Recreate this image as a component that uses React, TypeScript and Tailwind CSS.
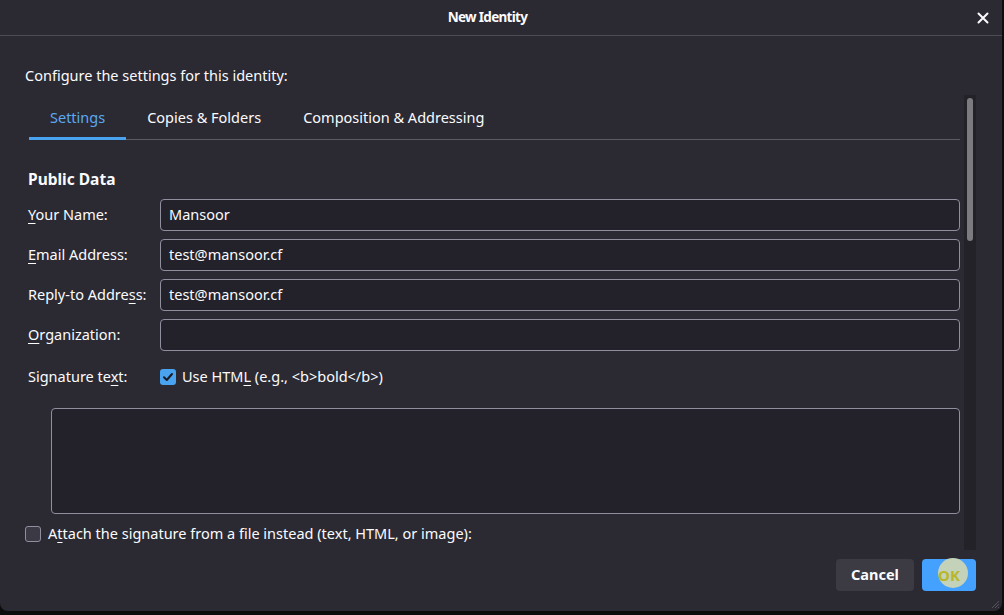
import React from "react";

const U = ({ children }: { children: React.ReactNode }) => (
  <span className="underline underline-offset-[3px] decoration-1">{children}</span>
);

function Field({ label, value }: { label: React.ReactNode; value?: string }) {
  return (
    <div className="flex items-center h-[32px]">
      <div className="w-[132px] shrink-0">{label}</div>
      <div className="flex-1 h-[32px] rounded-[4px] border border-[#8f8f9d] bg-[#23222b] flex items-center px-[8px]">
        {value}
      </div>
    </div>
  );
}

export default function App() {
  return (
    <div
      className="w-[1004px] h-[615px] bg-[#0d0d0d] text-[#fbfbfe] overflow-hidden text-[14.5px]"
      style={{ fontFamily: '"Noto Sans", "DejaVu Sans", sans-serif' }}
    >
      <div className="relative w-[1002px] h-[611px] bg-[#2b2a33] rounded-b-[8px] flex flex-col overflow-hidden">
        {/* Title bar */}
        <div className="relative h-[36px] shrink-0 border-b border-[#4d4c55] flex items-center justify-center pr-[27px]">
          <span className="text-[13.5px] font-bold tracking-[-0.7px]">New Identity</span>
          <svg
            className="absolute right-[13px] top-[12px]"
            width="12"
            height="12"
            viewBox="0 0 12 12"
          >
            <path d="M1.5 1.5 L10.5 10.5 M10.5 1.5 L1.5 10.5" stroke="#fbfbfe" strokeWidth="2" strokeLinecap="round" />
          </svg>
        </div>

        <div className="pl-[25px] pt-[29px] h-[20px] box-content leading-[20px]">
          Configure the settings for this identity:
        </div>

        {/* Scroll area */}
        <div className="mt-[10px] ml-[25px] w-[951px] h-[455px] flex">
          <div className="flex-1 flex flex-col overflow-hidden">
            {/* Tabs */}
            <div className="ml-[4px] mr-[4px] mt-[2px] flex border-b border-[#5b5b66] h-[43px] shrink-0">
              <div className="px-[21px] pt-[2px] flex items-center border-b-[3px] border-[#4aa3ef] -mb-px text-[#5aa9f2]">
                Settings
              </div>
              <div className="px-[21px] flex items-center">Copies &amp; Folders</div>
              <div className="px-[21px] flex items-center">Composition &amp; Addressing</div>
            </div>

            <div className="pl-[3px] pr-[4px] flex flex-col">
              <div className="mt-[29px] h-[22px] flex items-center text-[15.5px] font-bold">Public Data</div>
              <div className="mt-[8px] flex flex-col gap-[8px]">
                <Field label={<><U>Y</U>our Name:</>} value="Mansoor" />
                <Field label={<><U>E</U>mail Address:</>} value="test@mansoor.cf" />
                <Field label={<>Reply-to Addre<U>s</U>s:</>} value="test@mansoor.cf" />
                <Field label={<><U>O</U>rganization:</>} />
              </div>
              <div className="mt-[18px] flex items-center h-[16px]">
                <div className="w-[132px] shrink-0">
                  Signature te<U>x</U>t:
                </div>
                <div className="w-[16px] h-[16px] rounded-[3px] bg-[#4aa3ef] flex items-center justify-center">
                  <svg width="12" height="12" viewBox="0 0 12 12">
                    <path d="M2 6.3 L4.8 9 L10 3" fill="none" stroke="#1c1b22" strokeWidth="2" strokeLinecap="round" strokeLinejoin="round" />
                  </svg>
                </div>
                <span className="ml-[6px]">
                  Use HTM<U>L</U> (e.g., &lt;b&gt;bold&lt;/b&gt;)
                </span>
              </div>
              <div className="mt-[23px] ml-[23px] h-[106px] rounded-[4px] border border-[#8f8f9d] bg-[#23222b]" />
            </div>
            <div className="mt-[12px] flex items-center h-[16px]">
              <div className="w-[16px] h-[16px] rounded-[3px] border border-[#8f8f9d] bg-[#3a3944]" />
              <span className="ml-[7px]">
                A<U>t</U>tach the signature from a file instead (text, HTML, or image):
              </span>
            </div>
          </div>
          {/* Scrollbar */}
          <div className="w-[12px] h-full bg-[#232229] flex justify-center pt-[3px]">
            <div className="w-[6px] h-[143px] rounded-full bg-[#7c7c80]" />
          </div>
        </div>

        {/* Buttons */}
        <div className="mt-[9px] ml-[25px] w-[951px] flex justify-end gap-[8px]">
          <div className="w-[78px] h-[32px] rounded-[4px] bg-[#3c3b44] flex items-center justify-center font-bold">
            Cancel
          </div>
          <div className="relative w-[54px] h-[32px] rounded-[4px] bg-[#45a1ff] flex items-center justify-center font-bold">
            <span className="absolute left-[16px] top-[-1px] w-[30px] h-[30px] rounded-full bg-[#c3d2b8]" />
            <span className="relative text-[15px] text-[#b9b628]">OK</span>
          </div>
        </div>

        {/* Resize grip */}
        <svg className="absolute right-[2px] bottom-[2px]" width="10" height="10" viewBox="0 0 10 10">
          <path d="M9 2 L2 9 M9 5 L5 9 M9 8 L8 9" stroke="#55545c" strokeWidth="1" />
        </svg>
      </div>
    </div>
  );
}
